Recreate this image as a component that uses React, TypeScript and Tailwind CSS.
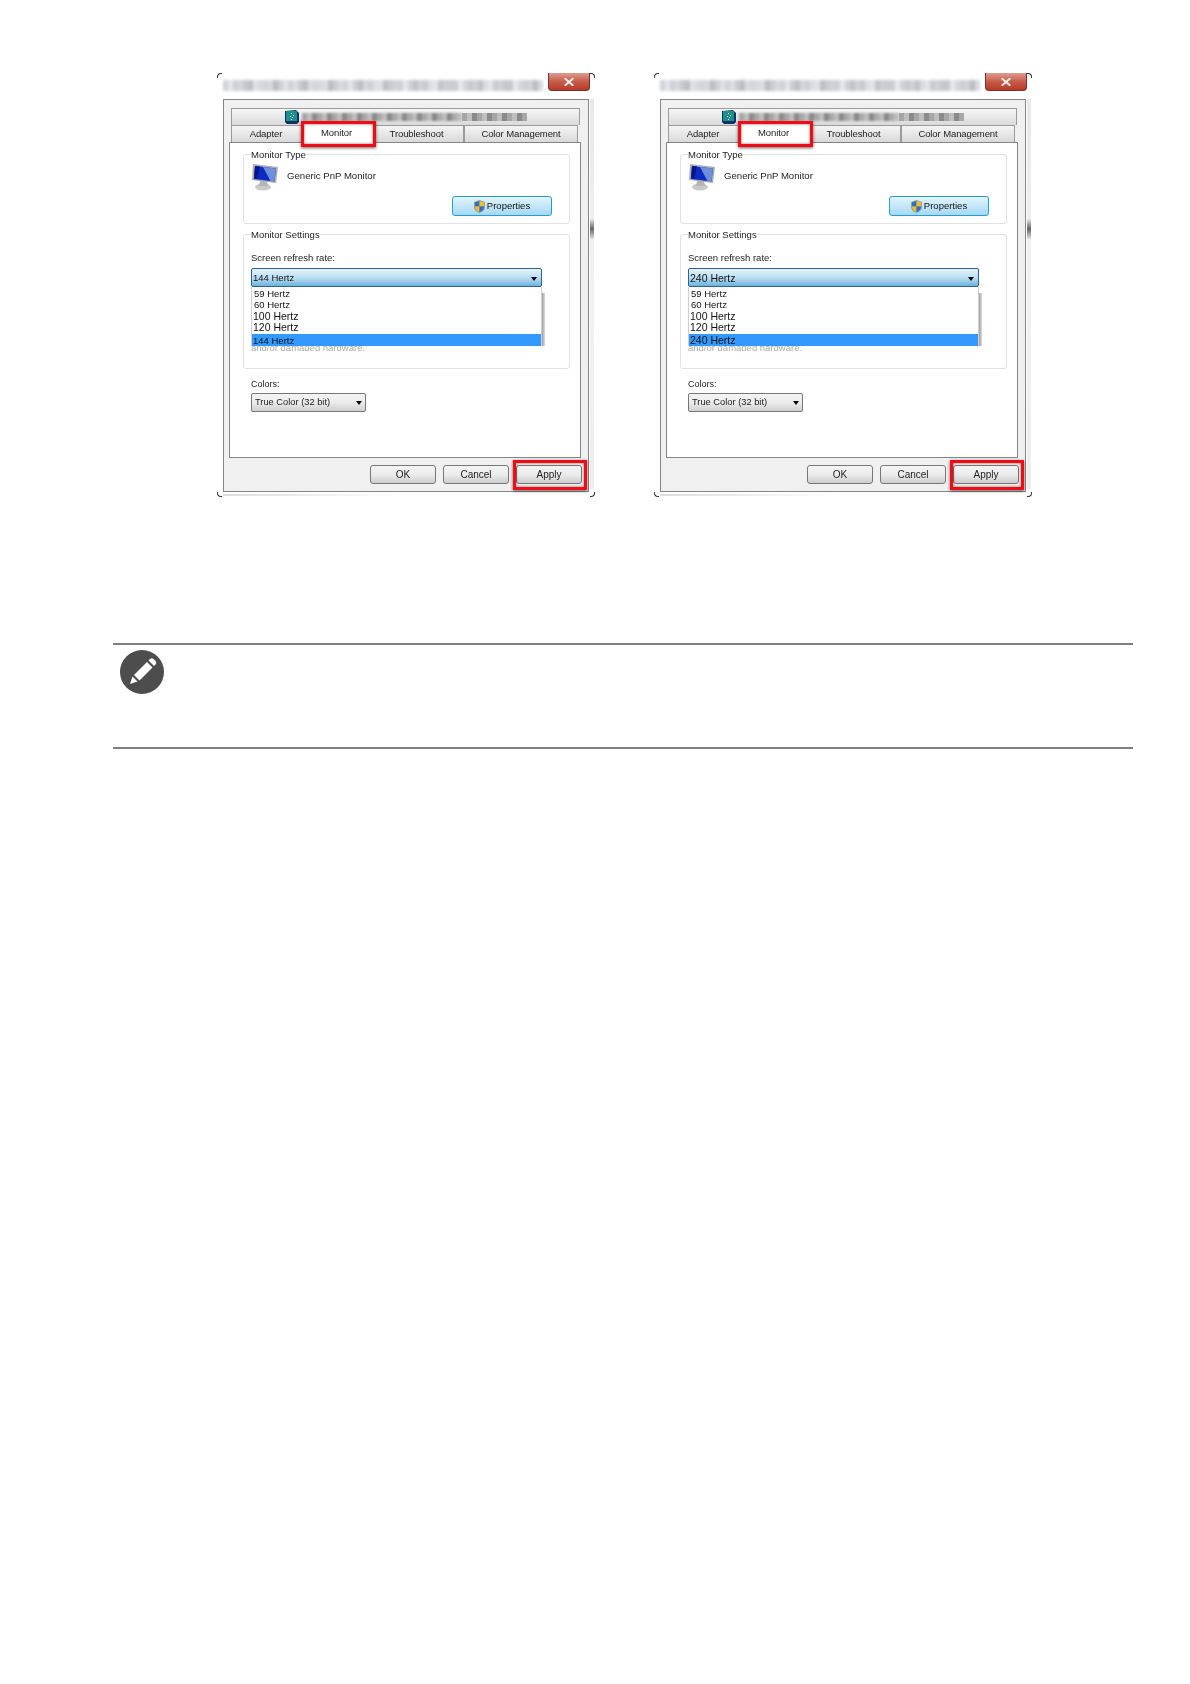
const titleBlocks = Array.from({ length: 64 }, (_, i) => {
  const v = 208 + Math.round(24 * Math.sin(i * 1.7) * Math.cos(i * 0.6))
  return `rgb(${v},${v + 2},${v + 8})`
})

const tabBlocks = Array.from({ length: 32 }, (_, i) => {
  const v = 165 + Math.round(30 * Math.sin(i * 2.1))
  return `rgb(${v},${v},${v})`
})

const Mosaic = ({ colors, className }: { colors: string[]; className: string }) => (
  <div className={`flex ${className}`}>
    {colors.map((c, i) => (
      <span key={i} className="h-full w-[5px]" style={{ backgroundColor: c }} />
    ))}
  </div>
)

const MonitorIcon = () => (
  <svg width="28" height="28" viewBox="0 0 28 28" className="shrink-0">
    <ellipse cx="12" cy="24" rx="8" ry="3.5" fill="#c9c9c9" />
    <path d="M9 18h7l1 5H8z" fill="#b5b5b5" />
    <path d="M2 1l25 3-2 16L1 17z" fill="#a9afb5" />
    <path d="M4 3l21 2.5-1.5 13L3 16z" fill="#0a2cc0" />
    <path d="M12 4l13 1.5-1.5 13-4-.5z" fill="#6f8fd8" />
    <path d="M4 3l5 .6L6 16l-3-.2z" fill="#06168a" />
  </svg>
)

const ShieldIcon = () => (
  <svg width="11" height="13" viewBox="0 0 11 13" className="shrink-0">
    <path d="M5.500 0L11 2v5c0 3-2.500 5-5.500 6C2.500 12 0 10 0 7V2z" fill="#9a9a9a" />
    <path d="M5.500 1L5.500 6.500H1V2.500z" fill="#2a6fd0" />
    <path d="M5.500 1L10 2.500V6.500H5.500z" fill="#f0c020" />
    <path d="M5.500 6.500V12C3 11 1 9.500 1 6.500z" fill="#f0c020" />
    <path d="M5.500 6.500H10C10 9.500 8 11 5.500 12z" fill="#2a6fd0" />
  </svg>
)

const ChipIcon = () => (
  <svg width="14" height="14" viewBox="0 0 14 14" className="shrink-0">
    <path d="M0 1l11-1 3 3v9l-2 2H2l-2-2z" fill="#10306a" />
    <rect x="1" y="1" width="11" height="10" fill="#1f8f8a" />
    <path d="M6 3h1v1H6zM8 5h1v1H8zM5 6h1v1H5zM7 7h1v1H7zM6 9h1v1H6z" fill="#d6f2ee" />
  </svg>
)

const Arrow = () => (
  <span className="h-0 w-0 border-x-[3.500px] border-t-[4px] border-x-transparent border-t-black" />
)

const RedBox = ({ className }: { className: string }) => (
  <span
    className={`pointer-events-none absolute z-10 border-[3px] border-[#f20a14] shadow-[0_1px_3px_rgba(0,0,0,0.6),inset_0_0_3px_rgba(0,0,0,0.55)] ${className}`}
  />
)

const Button = ({ label, children }: { label: string; children?: React.ReactNode }) => (
  <div className="relative flex h-[19px] w-[66px] items-center justify-center rounded-[3px] border border-[#777] bg-gradient-to-b from-[#f4f4f4] via-[#ececec] to-[#cdcdcd] text-[10px] text-[#222]">
    {label}
    {children}
  </div>
)

const Tab = ({ label, width }: { label: string; width: string }) => (
  <div
    className={`flex h-[17px] items-center justify-center border border-b-0 border-[#9a9a9a] bg-gradient-to-b from-[#f5f5f5] to-[#d9d9d9] pt-[1px] text-[9.500px] tracking-[-0.1px] text-[#222] ${width}`}
  >
    {label}
  </div>
)

const Dialog = ({ rates, current }: { rates: { label: string; size: string }[]; current: string }) => (
  <div className="relative h-[424px] w-[378px] blur-[0.3px]">
    {/* window corners */}
    <span className="absolute left-0 top-0 h-[5px] w-[5px] rounded-tl-[4px] border-l border-t border-[#333]" />
    <span className="absolute right-0 top-0 h-[5px] w-[5px] rounded-tr-[4px] border-r border-t border-[#333]" />
    <span className="absolute bottom-0 left-0 h-[5px] w-[5px] rounded-bl-[4px] border-b border-l border-[#333]" />
    <span className="absolute bottom-0 right-0 h-[5px] w-[5px] rounded-br-[4px] border-b border-r border-[#333]" />
    <span className="absolute bottom-[1px] left-[6px] h-[2px] w-[180px] bg-gradient-to-r from-[#ddd] to-transparent" />
    <span className="absolute right-[1px] top-[26px] h-[390px] w-[4px] bg-gradient-to-b from-[#e8e8e8] via-[#f2f2f2] to-[#ededed]" />
    <span className="absolute right-[1px] top-[146px] h-[20px] w-[4px] bg-gradient-to-b from-[#e8e8e8] via-[#666] to-[#e4e4e4]" />

    {/* close button */}
    <div className="absolute right-[5px] top-0 flex h-[18px] w-[42px] items-center justify-center rounded-b-[4px] border border-t-0 border-[#7a3030] bg-gradient-to-b from-[#dc9c90] via-[#c75c4a] to-[#b83a28]">
      <svg width="10" height="8" viewBox="0 0 10 8">
        <path d="M1.500 1l7 6M8.500 1l-7 6" stroke="#eee" strokeWidth="2" strokeLinecap="square" fill="none" />
      </svg>
    </div>

    <div className="flex h-[26px] items-center pl-[6px]">
      <Mosaic colors={titleBlocks} className="mb-[2px] h-[11px] blur-[1.500px]" />
    </div>

    <div className="ml-[6px] h-[393px] w-[366px] border border-[#858585] bg-[#f0f0f0]">
      <div className="ml-[7px] mt-[8px] flex h-[17px] w-[349px] items-center border border-b-0 border-[#9a9a9a] bg-gradient-to-b from-[#f6f6f6] to-[#dadada] pl-[53px]">
        <ChipIcon />
        <Mosaic colors={tabBlocks} className="ml-[3px] h-[8px] blur-[0.8px]" />
        <Mosaic colors={tabBlocks.slice(0, 13)} className="h-[8px] blur-[0.5px]" />
      </div>

      <div className="relative z-[1] -mb-px ml-[7px] flex">
        <Tab label="Adapter" width="w-[72px] pr-[2px]" />
        <div className="relative -mt-[3px] flex h-[21px] w-[70px] items-center justify-center bg-white text-[9.500px] tracking-[-0.1px] text-[#222]">
          <span className="-ml-[3px] mt-[2px]">Monitor</span>
          <RedBox className="-bottom-[4px] -left-[2px] -right-[3px] -top-[1px]" />
        </div>
        <Tab label="Troubleshoot" width="w-[91px] pr-[4px]" />
        <Tab label="Color Management" width="w-[114px]" />
      </div>

      <div className="ml-[5px] h-[316px] w-[352px] border border-[#858585] bg-white pl-[13px] pt-[11px] text-[#222]">
        <div className="flex h-[70px] w-[327px] flex-col rounded-[3px] border border-[#dce2e6]">
          <div className="-mt-[7px] ml-[7px] h-[14px] w-fit bg-white text-[9.500px] leading-[14px]">Monitor Type</div>
          <div className="ml-[7px] mt-[1px] flex items-center gap-[8px]">
            <MonitorIcon />
            <span className="-mt-[2px] text-[9.600px]">Generic PnP Monitor</span>
          </div>
          <div className="ml-[208px] mt-[5px] flex h-[20px] w-[100px] items-center justify-center gap-[2px] rounded-[3px] border-[1.500px] border-[#1f9fd2] bg-gradient-to-b from-[#e4f4fc] via-[#c4e6f8] to-[#a6d8f2] text-[9.500px] text-[#111]">
            <ShieldIcon />
            Properties
          </div>
        </div>

        <div className="mt-[10px] h-[135px] w-[327px] rounded-[3px] border border-[#dce2e6]">
          <div className="-mt-[7px] ml-[7px] h-[14px] w-fit bg-white text-[9.500px] leading-[14px]">Monitor Settings</div>
          <div className="ml-[7px] mt-[9px] h-[14px] text-[9.500px] leading-[14px]">Screen refresh rate:</div>
          <div className="relative ml-[7px] mt-[3px] w-[291px]">
            <div className="flex h-[19px] items-center justify-between rounded-[2px] border border-[#2c628b] bg-gradient-to-b from-[#e4f2fb] via-[#bcdff2] to-[#6db3dc] pl-[1px] pr-[4px] pt-[2px] font-medium text-[#111]">
              <span className={current === '240 Hertz' ? 'text-[10.500px]' : 'text-[9.500px]'}>{current}</span>
              <Arrow />
            </div>
            <div className="h-[59px] border-x border-b border-[#cfcfcf] bg-white pt-[2px] text-[#111]">
              {rates.map((r) => (
                <div key={r.label} className={`flex h-[11px] items-center ${r.size}`}>
                  {r.label}
                </div>
              ))}
              <div className={`mt-[1px] flex h-[12px] items-center bg-[#3399ff] pl-[1px] pt-[2px] ${current === '240 Hertz' ? 'text-[10.500px]' : 'text-[9.500px]'}`}>
                {current}
              </div>
            </div>
            <span className="absolute -right-[3px] bottom-[5px] top-[25px] w-[3px] bg-gradient-to-r from-[#a0a0a0] to-[#dcdcdc]" />
            <div className="h-[5px] overflow-hidden text-[9.500px] leading-[4px] text-[#aaa]">and/or damaged hardware.</div>
          </div>
        </div>

        <div className="ml-[8px] mt-[8px] h-[14px] text-[9px] leading-[14px]">Colors:</div>
        <div className="ml-[8px] mt-[2px] flex h-[19px] w-[115px] items-center justify-between rounded-[2px] border border-[#777] bg-gradient-to-b from-[#f4f4f4] via-[#ececec] to-[#cfcfcf] pl-[3px] pr-[3px] text-[9.300px] text-[#222]">
          True Color (32 bit)
          <Arrow />
        </div>
      </div>

      <div className="mt-[7px] flex justify-end gap-[7px] pr-[6px]">
        <Button label="OK" />
        <Button label="Cancel" />
        <Button label="Apply">
          <RedBox className="-bottom-[7px] -left-[4px] -right-[6px] -top-[6px]" />
        </Button>
      </div>
    </div>
  </div>
)

const baseRates = [
  { label: '59 Hertz', size: 'pl-[2px] text-[9.500px]' },
  { label: '60 Hertz', size: 'pl-[2px] text-[9.500px]' },
  { label: '100 Hertz', size: 'pl-[1px] text-[10.500px]' },
  { label: '120 Hertz', size: 'pl-[1px] text-[10.500px]' },
]

export default function App() {
  return (
    <div className="h-[1684px] w-[1190px] bg-white pt-[73px] font-['Liberation_Sans',Arial,sans-serif]">
      <div className="flex gap-[59px] pl-[217px]">
        <Dialog rates={baseRates} current="144 Hertz" />
        <Dialog rates={baseRates} current="240 Hertz" />
      </div>

      <div className="ml-[113px] mt-[146px] h-[106px] w-[1020px] border-y-2 border-[#808080] pl-[7px] pt-[5px]">
        <svg width="44" height="44" viewBox="0 0 44 44">
          <circle cx="22" cy="22" r="22" fill="#4d4d4d" />
          <path d="M10 34l2.500-7.500 5 5z" fill="#fff" />
          <path d="M14 25L27 12l5.500 5.500-13 13z" fill="#fff" />
          <path d="M28.500 10.500l1.500-1.500c1-1 2.500-1 3.500 0l2 2c1 1 1 2.500 0 3.500L34 16z" fill="#fff" />
        </svg>
      </div>
    </div>
  )
}
